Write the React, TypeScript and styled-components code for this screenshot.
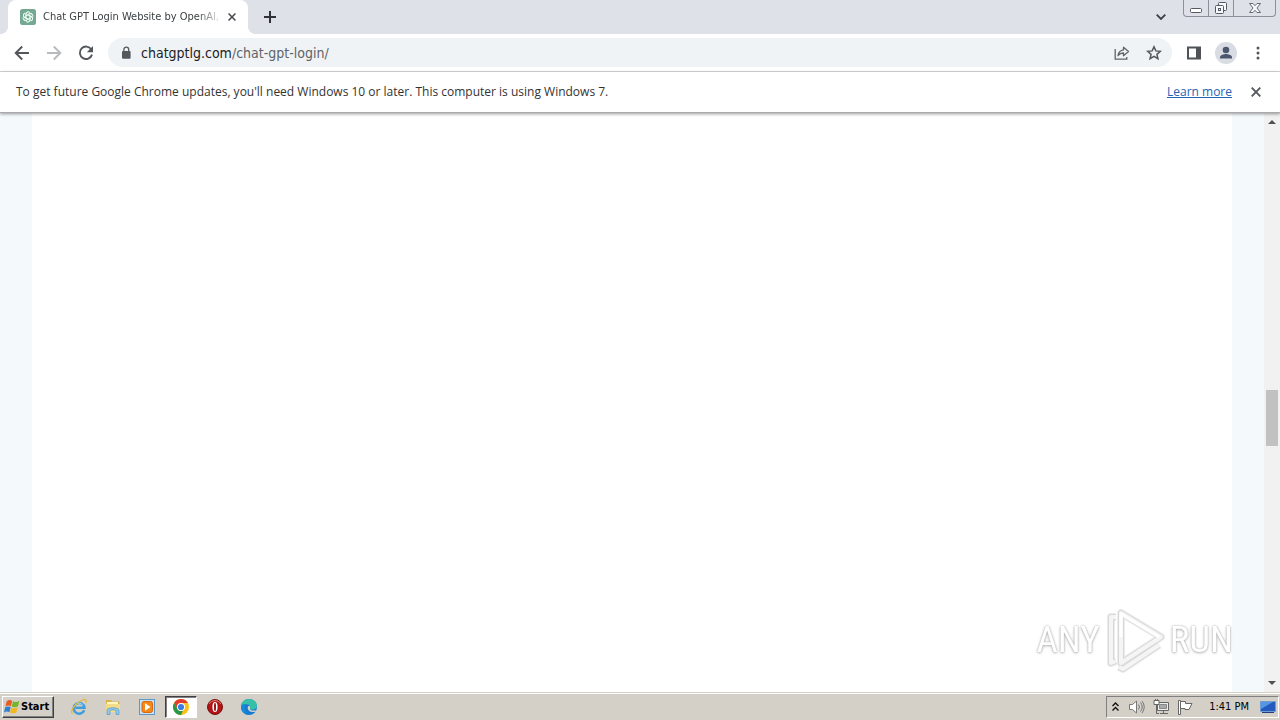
import React from "react";
import styled, { createGlobalStyle } from "styled-components";

const GlobalStyle = createGlobalStyle`
  *, *::before, *::after { box-sizing: border-box; }
  html, body { margin: 0; }
  body { font-family: "DejaVu Sans Condensed", "Noto Sans", sans-serif; font-size: 12px; color: #333; background: #fff; }
  button { font: inherit; color: inherit; padding: 0; margin: 0; border: 0; background: none; }
  svg { display: block; flex: none; }
`;

const Screen = styled.div`
  min-height: 100vh;
  display: flex;
  flex-direction: column;
`;

const TabStrip = styled.header`
  height: 34px;
  padding-left: 8px;
  display: flex;
  align-items: flex-start;
  background: #dee1e8;
`;

const Tab = styled.div`
  position: relative;
  width: 240px;
  height: 34px;
  padding: 0 8px 0 12px;
  display: flex;
  align-items: center;
  background: #fff;
  border-radius: 8px 8px 0 0;
  &::before, &::after {
    content: "";
    position: absolute;
    bottom: 0;
    width: 8px;
    height: 8px;
  }
  &::before { left: -8px; background: radial-gradient(circle at 0 0, transparent 8px, #fff 8px); }
  &::after { right: -8px; background: radial-gradient(circle at 100% 0, transparent 8px, #fff 8px); }
`;

const TabTitle = styled.span`
  flex: 1;
  margin-left: 7px;
  overflow: hidden;
  white-space: nowrap;
  font-size: 11px;
  line-height: 16px;
  color: #3c4043;
  mask-image: linear-gradient(to right, #000 154px, transparent 180px);
`;

const IconButton = styled.button<{ $size?: number }>`
  width: ${(p) => p.$size ?? 32}px;
  height: ${(p) => p.$size ?? 32}px;
  flex: none;
  display: flex;
  align-items: center;
  justify-content: center;
`;

const NewTab = styled(IconButton)`
  margin: 1px 0 0 6px;
`;

const WindowControls = styled.div`
  margin-left: auto;
  padding-right: 4px;
  display: flex;
`;

const TabSearch = styled(IconButton)`
  margin: 1px 6px 0 0;
`;

const ControlGroup = styled.div`
  height: 17px;
  display: flex;
  border: 1px solid #8c9099;
  border-top: 0;
  border-radius: 0 0 4px 4px;
`;

const WindowButton = styled.button<{ $width: number }>`
  width: ${(p) => p.$width}px;
  display: flex;
  align-items: center;
  justify-content: center;
  & + & { border-left: 1px solid #8c9099; }
`;

const Toolbar = styled.nav`
  height: 38px;
  padding: 0 6px;
  display: flex;
  align-items: center;
  background: #fff;
  border-bottom: 1px solid #d5d7da;
`;

const AddressBar = styled.form`
  flex: 1;
  height: 29px;
  margin: 0 6px;
  padding: 0 2px 0 12px;
  display: flex;
  align-items: center;
  border-radius: 15px;
  background: #f0f3f5;
`;

const Address = styled.a`
  flex: 1;
  margin-left: 9px;
  font-size: 14px;
  line-height: 20px;
  color: #5f6368;
  text-decoration: none;
`;

const Domain = styled.span`
  color: #202124;
`;

const Avatar = styled.span`
  width: 22px;
  height: 22px;
  border-radius: 50%;
  background: #d9dce3;
  overflow: hidden;
`;

const InfoBar = styled.aside`
  position: relative;
  height: 41px;
  padding: 0 8px 0 16px;
  display: flex;
  align-items: center;
  background: #fff;
  border-bottom: 1px solid #aaa;
  box-shadow: 0 1px 3px rgba(0, 0, 0, 0.4);
  font-family: "Open Sans", "Noto Sans", sans-serif;
`;

const InfoText = styled.p`
  flex: 1;
  margin: 0;
  font-size: 12px;
  line-height: 16px;
`;

const InfoLink = styled.a`
  margin-right: 8px;
  line-height: 16px;
  color: #2463b4;
`;

const Viewport = styled.div`
  flex: 1;
  display: flex;
  background: #f4f9fc;
`;

const Article = styled.main`
  flex: 1;
  margin: 0 32px;
  background: #fff;
`;

const ScrollTrack = styled.div`
  width: 16px;
  padding: 0 2px;
  display: flex;
  flex-direction: column;
  align-items: center;
  background: #f1f1f1;
`;

const Space = styled.div<{ $grow: number }>`
  flex: ${(p) => p.$grow} 0 0;
`;

const Thumb = styled.div`
  width: 12px;
  height: 56px;
  background: #c1c1c1;
`;

const ArrowButton = styled(IconButton)`
  height: 18px;
`;

const Watermark = styled.div`
  position: fixed;
  right: 47px;
  bottom: 47px;
  display: flex;
  align-items: center;
  gap: 5px;
  font-family: "Roboto Condensed", "Open Sans Condensed", "Noto Sans Condensed", Roboto, sans-serif;
  font-size: 37px;
  line-height: 66px;
  color: #fff;
  text-shadow: 0 0 2px #aaa, 0 1px 3px #bbb;
`;

const Taskbar = styled.footer`
  height: 28px;
  padding: 2px 1px 2px 2px;
  display: flex;
  align-items: center;
  background: #d4d0c8;
  box-shadow: inset 0 1px #d4d0c8, inset 0 2px #fff;
`;

const StartButton = styled.button`
  width: 52px;
  height: 22px;
  margin: 1px 8px 0 0;
  padding-left: 1px;
  display: flex;
  align-items: center;
  gap: 1px;
  border: 1px solid;
  border-color: #fff #404040 #404040 #fff;
  box-shadow: inset -1px -1px #808080;
  font-weight: 700;
  font-size: 11px;
  line-height: 16px;
  color: #000;
`;

const TaskButton = styled.button<{ $active?: boolean }>`
  width: 32px;
  height: 22px;
  margin: 1px 1px 0;
  display: flex;
  align-items: center;
  justify-content: center;
  border: 1px solid;
  border-color: ${(p) => (p.$active ? "#404040 #fff #fff #404040" : "transparent")};
  background: ${(p) => (p.$active ? "#fff" : "none")};
  box-shadow: ${(p) => (p.$active ? "inset 1px 1px #808080" : "none")};
`;

const Tray = styled.div`
  height: 22px;
  margin: 1px 0 0 auto;
  padding: 0 2px 0 5px;
  display: flex;
  align-items: center;
  gap: 8px;
  border: 1px solid;
  border-color: #808080 #fff #fff #808080;
`;

const Clock = styled.time`
  margin: 0 3px 0 8px;
  font-size: 11px;
  line-height: 16px;
  color: #000;
`;

const Cross = ({ size = 8, color = "#45484d" }: { size?: number; color?: string }) => (
  <svg width={size} height={size} viewBox="0 0 10 10" stroke={color} strokeWidth="1.9">
    <path d="M.7.7l8.6 8.6M9.3.7L.7 9.3" />
  </svg>
);

const Favicon = () => (
  <svg width="16" height="16" viewBox="0 0 16 16">
    <rect width="16" height="16" rx="2.5" fill="#74a892" />
    <g fill="none" stroke="#edfff7" strokeWidth=".9">
      {[0, 60, 120, 180, 240, 300].map((a) => (
        <path key={a} transform={`rotate(${a} 8 8)`} d="M6 9V5.2a2.4 2.4 0 0 1 4.2-1.5M6 6.8l3.2-1.9a2.4 2.4 0 0 1 3.3.9" />
      ))}
    </g>
  </svg>
);

const Back = () => (
  <svg width="16" height="16" viewBox="0 0 16 16" fill="none" stroke="#53565a" strokeWidth="1.9">
    <path d="M15 8H2.2M8.2 1.5L1.7 8l6.5 6.5" />
  </svg>
);

const Forward = () => (
  <svg width="16" height="16" viewBox="0 0 16 16" fill="none" stroke="#b8babd" strokeWidth="1.9">
    <path d="M1 8h12.8M7.8 1.5L14.3 8l-6.5 6.5" />
  </svg>
);

const Reload = () => (
  <svg width="16" height="16" viewBox="0 0 16 16">
    <path d="M13.3 4.4A6.2 6.2 0 1 0 14 9.6" fill="none" stroke="#53565a" strokeWidth="1.9" />
    <path d="M15 1v6.2H8.8z" fill="#53565a" />
  </svg>
);

const Lock = () => (
  <svg width="12" height="14" viewBox="0 0 12 14">
    <rect x="2" y="5" width="8.6" height="7.8" rx="1" fill="#55585d" />
    <path d="M3.9 5V3.5a2.4 2.4 0 0 1 4.8 0V5" fill="none" stroke="#55585d" strokeWidth="1.3" />
  </svg>
);

const Share = () => (
  <svg width="16" height="16" viewBox="0 0 16 16" fill="none" stroke="#606469" strokeWidth="1.3">
    <path d="M1.2 4v10.2h11.6V12" />
    <path d="M4 10.7c.5-3.6 2.3-5.4 5.5-5.8V2.2l5 4.3-5 4.2V8C7 8 5.3 8.9 4 10.7z" strokeLinejoin="round" />
  </svg>
);

const Star = () => (
  <svg width="16" height="16" viewBox="0 0 16 16" fill="none" stroke="#53565a" strokeWidth="1.5">
    <path d="M8 1.8l1.85 4.1 4.45.45-3.35 3 1 4.4L8 11.45l-3.95 2.3 1-4.4-3.35-3 4.45-.45z" />
  </svg>
);

const SidePanel = () => (
  <svg width="16" height="16" viewBox="0 0 16 16">
    <path d="M1 1.5h14v13H1z" fill="#4f5256" />
    <path d="M3 3.5h7v9H3z" fill="#fff" />
  </svg>
);

const Person = () => (
  <svg width="22" height="22" viewBox="0 0 22 22" fill="#4c566f">
    <circle cx="11" cy="8" r="3.3" />
    <path d="M5 16.5v-1.4c0-2 4-3.1 6-3.1s6 1.1 6 3.1v1.4z" />
  </svg>
);

const Windows = () => (
  <svg width="16" height="16" viewBox="0 0 16 16">
    <path d="M2.7 2.2c2-1.5 3.9-1.3 5.5-.3L6.9 7.2c-1.7-1-3.5-1-5.5.2z" fill="#e85a24" />
    <path d="M9 2.3c1.9 1.1 4 1 6.4-.3l-1.4 5.3c-2.1 1.2-4.2 1.3-6.3.2z" fill="#75b52c" />
    <path d="M1.2 8.3c1.9-1.3 3.7-1.1 5.5-.2L5.4 13.2c-1.7-1-3.5-.9-5.4.2z" fill="#2d80cd" />
    <path d="M7.4 8.5c2 1 4.1.9 6.3-.3l-1.4 5.2c-2.1 1.2-4.2 1.2-6.3.2z" fill="#f2b71e" />
  </svg>
);

const Explorer = () => (
  <svg width="18" height="18" viewBox="0 0 18 18" fill="none">
    <path d="M14.2 12.2A5.4 5.4 0 1 1 14.5 9.8H5.3" stroke="#3f9fdc" strokeWidth="2.5" />
    <path d="M12.9 7.5a4.6 4.6 0 0 0-8-.2" stroke="#9fdcf6" strokeWidth="1" />
    <path d="M2.6 15.7C-1 13.5 6 4.5 12.5 2c3.5-1.3 4.5.2 3.2 3" stroke="#e6b83b" strokeWidth="1.3" />
  </svg>
);

const Folder = () => (
  <svg width="18" height="18" viewBox="0 0 18 18">
    <path d="M2 2h5l1 1.500h7.500V13H2z" fill="#d8b353" />
    <path d="M3 4h11v4H3z" fill="#fff6bd" />
    <path d="M2 6h14v8H2z" fill="#f3dc89" />
    <path d="M3 16.500V12c0-3 12-3 12 0v4.500h-3V13c0-1.500-6-1.500-6 0v3.500z" fill="#8cc6ea" stroke="#4a94c5" strokeWidth=".6" />
  </svg>
);

const Player = () => (
  <svg width="18" height="18" viewBox="0 0 18 18">
    <rect x="1.5" y="1.5" width="15" height="15" fill="#c9e2f7" stroke="#5e98c8" />
    <rect x="4" y="3.5" width="10.5" height="11" rx="2" fill="#f38718" stroke="#d96909" />
    <path d="M7 5.3L12.5 9 7 12.7z" fill="#fff" />
  </svg>
);

const Chrome = () => (
  <svg width="18" height="18" viewBox="0 0 18 18">
    <circle cx="9" cy="9" r="8" fill="#fbc116" />
    <path d="M2.07 5A8 8 0 0 1 15.93 5H9a4 4 0 0 0-3.46 6z" fill="#e33b2e" />
    <path d="M2.07 5l3.47 6A4 4 0 0 0 9 13l2-.5L9 17A8 8 0 0 1 2.07 5z" fill="#279847" />
    <circle cx="9" cy="9" r="4" fill="#fff" />
    <circle cx="9" cy="9" r="3.1" fill="#3c7de5" />
  </svg>
);

const Opera = () => (
  <svg width="18" height="18" viewBox="0 0 18 18">
    <circle cx="9" cy="9" r="7.5" fill="#b51218" stroke="#74130f" />
    <path d="M3 6a7 7 0 0 1 12 0" fill="none" stroke="#ea7d75" />
    <ellipse cx="9" cy="9" rx="2.6" ry="5" fill="#fff" />
    <ellipse cx="9" cy="9" rx="1" ry="4.2" fill="#981014" />
  </svg>
);

const Edge = () => (
  <svg width="18" height="18" viewBox="0 0 18 18">
    <circle cx="9" cy="9" r="8" fill="#167bd0" />
    <path d="M1 8.5C1.5 3.8 4.6 1 9 1c4.7 0 8 3.2 8 6.5 0 3-2.3 4.3-4.7 4.3-2 0-2.900-.7-2.400-1.600 1-2.200-.8-4-3.700-4C3.800 6.200 1.700 7 1 8.500z" fill="#36bfa9" />
    <path d="M1 8.500C2 6.500 4 5.800 6.200 6.200 3.600 8 3.500 13.500 9 16.900 4.500 17 .8 13.500 1 8.500z" fill="#168bd9" />
    <path d="M8.200 8c-1.600 3 .7 7.200 7.200 5.700l1.400-1.500c-3 .8-6.800.2-6.900-1.300.4-.8.300-2-.2-3z" fill="#d4d0c8" />
  </svg>
);

const Speaker = () => (
  <svg width="18" height="16" viewBox="0 0 18 16" fill="none" stroke="#777" strokeWidth="1">
    <path d="M2.5 5.5h3L9.5 2v12l-4-3.5h-3z" fill="#fff" />
    <path d="M11.5 5.5q2 2.5 0 5M13.5 3.5q3.500 4.500 0 9M15 2q4.500 6 0 12" />
  </svg>
);

const Network = () => (
  <svg width="16" height="16" viewBox="0 0 16 16" fill="none" stroke="#666">
    <path d="M4.5 3.5h11v8h-11z" fill="#eee" />
    <path d="M6.5 5.5h7v4h-7z" fill="#aaa" stroke="#888" />
    <path d="M7 14.5h8M10.5 12v2M3.5 6v8.5H6" />
    <path d="M1 1.5h5v4H1zM2.5 0v2M4.5 0v2" fill="#fff" />
  </svg>
);

const Flag = () => (
  <svg width="16" height="16" viewBox="0 0 16 16" stroke="#666">
    <path d="M1.5 1.5h2v14h-2z" fill="#fff" />
    <path d="M3.5 2.5h5v2h6.5l-3 6H8v-1H3.5z" fill="#fff" />
  </svg>
);

const Desktop = () => (
  <svg width="16" height="16" viewBox="0 0 16 16">
    <path d="M.5 2.5h15v10H.5z" fill="#245abe" stroke="#6f9dd3" />
    <path d="M1 3h12L1 10z" fill="#5697e4" />
    <path d="M2 13h12v1H2z" fill="#243d7c" />
  </svg>
);

const PlayMark = () => (
  <svg width="60" height="66" viewBox="0 0 60 66" fill="none" strokeLinejoin="round">
    {[
      { c: "#ececec", w: 8 },
      { c: "#d8d8d8", w: 6 },
      { c: "#f5f5f5", w: 4 },
    ].map((s) => (
      <g key={s.c} stroke={s.c} strokeWidth={s.w}>
        <path d="M16 6v50l40-26z" />
        <path d="M11 10H6v46l5-2M14 60l4 2 36-24" />
      </g>
    ))}
    <path d="M16 30V7l38 23" stroke="#fff" strokeWidth="3" />
  </svg>
);

export default function App() {
  return (
    <Screen>
      <GlobalStyle />
      <TabStrip>
        <Tab>
          <Favicon />
          <TabTitle>Chat GPT Login Website by OpenAI,</TabTitle>
          <IconButton $size={16} aria-label="Close tab"><Cross /></IconButton>
        </Tab>
        <NewTab aria-label="New tab">
          <svg width="12" height="12" viewBox="0 0 12 12" stroke="#303238" strokeWidth="2"><path d="M6 0v12M0 6h12" /></svg>
        </NewTab>
        <WindowControls>
          <TabSearch aria-label="Search tabs">
            <svg width="10" height="6" viewBox="0 0 10 6" fill="none" stroke="#3c4043" strokeWidth="1.8"><path d="M.7.7L5 5 9.3.7" /></svg>
          </TabSearch>
          <ControlGroup>
            <WindowButton $width={24} aria-label="Minimize">
              <svg width="14" height="12" viewBox="0 0 14 12"><rect x="1.5" y="6.5" width="11" height="4" rx="1" fill="#fff" stroke="#555963" /></svg>
            </WindowButton>
            <WindowButton $width={25} aria-label="Restore">
              <svg width="14" height="14" viewBox="0 0 14 14" fill="#f7f8fa" stroke="#555963">
                <rect x="4.5" y="1.5" width="8" height="8" rx="1" />
                <rect x="1.5" y="4.5" width="8" height="8" rx="1" />
                <rect x="4.5" y="7.5" width="2" height="2" />
              </svg>
            </WindowButton>
            <WindowButton $width={42} aria-label="Close">
              <svg width="14" height="12" viewBox="0 0 14 12"><path d="M1.5 1.5h3.5l2 2.2 2-2.2h3.5L9 6l3.5 4.5H9L7 8.3l-2 2.2H1.5L5 6z" fill="#f7f8fa" stroke="#666a73" /></svg>
            </WindowButton>
          </ControlGroup>
        </WindowControls>
      </TabStrip>
      <Toolbar>
        <IconButton aria-label="Back"><Back /></IconButton>
        <IconButton aria-label="Forward"><Forward /></IconButton>
        <IconButton aria-label="Reload"><Reload /></IconButton>
        <AddressBar>
          <Lock />
          <Address href="#"><Domain>chatgptlg.com</Domain>/chat-gpt-login/</Address>
          <IconButton type="button" aria-label="Share"><Share /></IconButton>
          <IconButton type="button" aria-label="Bookmark"><Star /></IconButton>
        </AddressBar>
        <IconButton aria-label="Side panel"><SidePanel /></IconButton>
        <IconButton aria-label="Profile"><Avatar><Person /></Avatar></IconButton>
        <IconButton aria-label="Menu">
          <svg width="4" height="14" viewBox="0 0 4 14" fill="#53565a"><circle cx="2" cy="2" r="1.5" /><circle cx="2" cy="7" r="1.5" /><circle cx="2" cy="12" r="1.5" /></svg>
        </IconButton>
      </Toolbar>
      <InfoBar>
        <InfoText>To get future Google Chrome updates, you'll need Windows 10 or later. This computer is using Windows 7.</InfoText>
        <InfoLink href="#">Learn more</InfoLink>
        <IconButton aria-label="Dismiss"><Cross size={10} color="#55585c" /></IconButton>
      </InfoBar>
      <Viewport>
        <Article />
        <ScrollTrack>
          <ArrowButton $size={16} aria-label="Scroll up"><svg width="8" height="4" viewBox="0 0 8 4" fill="#505050"><path d="M0 4l4-4 4 4z" /></svg></ArrowButton>
          <Space $grow={259} />
          <Thumb />
          <Space $grow={228} />
          <ArrowButton $size={16} aria-label="Scroll down"><svg width="8" height="4" viewBox="0 0 8 4" fill="#505050"><path d="M0 0l4 4 4-4z" /></svg></ArrowButton>
        </ScrollTrack>
      </Viewport>
      <Watermark><span>ANY</span><PlayMark /><span>RUN</span></Watermark>
      <Taskbar>
        <StartButton><Windows />Start</StartButton>
        <TaskButton aria-label="Internet Explorer"><Explorer /></TaskButton>
        <TaskButton aria-label="Files"><Folder /></TaskButton>
        <TaskButton aria-label="Media Player"><Player /></TaskButton>
        <TaskButton $active aria-label="Chrome"><Chrome /></TaskButton>
        <TaskButton aria-label="Opera"><Opera /></TaskButton>
        <TaskButton aria-label="Edge"><Edge /></TaskButton>
        <Tray>
          <svg width="7" height="10" viewBox="0 0 7 10" fill="none" stroke="#111" strokeWidth="1.4"><path d="M.5 4l3-3 3 3M.5 8.5l3-3 3 3" /></svg>
          <Speaker />
          <Network />
          <Flag />
          <Clock>1:41 PM</Clock>
          <Desktop />
        </Tray>
      </Taskbar>
    </Screen>
  );
}
